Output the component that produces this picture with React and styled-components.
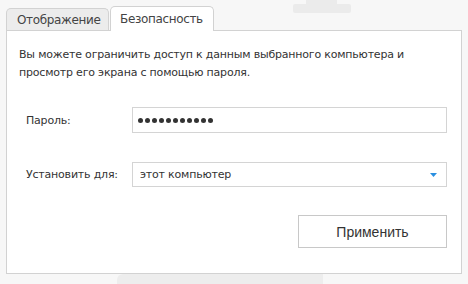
import React from "react";
import styled, { createGlobalStyle } from "styled-components";

const GlobalStyle = createGlobalStyle`
  html, body {
    margin: 0;
    padding: 0;
    background: #f7f7f7;
  }
  body {
    font-family: "DejaVu Sans", Verdana, sans-serif;
    width: 468px;
    height: 284px;
    overflow: hidden;
  }
`;

const Page = styled.div`
  position: relative;
  padding: 6px 6px 0 6px;
`;

// faint backdrop shapes behind the dialog
const StandTop = styled.div`
  position: absolute;
  left: 306px;
  top: 0;
  width: 31px;
  height: 5px;
  background: #ebebeb;
`;

const StandBase = styled.div`
  position: absolute;
  left: 293px;
  top: 4px;
  width: 58px;
  height: 9px;
  border-radius: 2px;
  background: #ebebeb;
`;

const Shelf = styled.div`
  position: absolute;
  left: 117px;
  top: 274px;
  width: 206px;
  height: 10px;
  border-radius: 6px 0 0 0;
  background: #ededed;
`;

const Dialog = styled.div`
  position: relative;
  z-index: 1;
`;

const TabBar = styled.div`
  display: flex;
  align-items: flex-end;
  gap: 1px;
  height: 24px;
`;

const Tab = styled.div`
  box-sizing: border-box;
  position: relative;
  display: flex;
  align-items: center;
  padding-left: ${(p) => (p.$active ? "9px" : "10px")};
  width: ${(p) => (p.$active ? "104px" : "103px")};
  height: ${(p) => (p.$active ? "25px" : "22px")};
  margin-bottom: ${(p) => (p.$active ? "-1px" : "0")};
  background: ${(p) => (p.$active ? "#ffffff" : "#ececec")};
  border: 1px solid #d2d2d2;
  border-bottom: none;
  border-radius: 5px 5px 0 0;
  font-size: 12px;
  letter-spacing: -0.35px;
  color: #444;
  z-index: ${(p) => (p.$active ? 2 : 1)};
`;

const Panel = styled.div`
  box-sizing: border-box;
  width: 456px;
  height: 244px;
  background: #fff;
  border: 1px solid #d2d2d2;
  padding: 15px 14px 0 12px;
`;

const Description = styled.p`
  margin: 0;
  font-size: 11px;
  line-height: 18px;
  letter-spacing: -0.2px;
  color: #333;
`;

const Row = styled.div`
  display: grid;
  grid-template-columns: 106px 315px;
  align-items: center;
  padding-left: 7px;
  margin-top: ${(p) => p.$top}px;
`;

const Label = styled.span`
  font-size: 11px;
  letter-spacing: -0.2px;
  color: #333;
`;

const Field = styled.div`
  box-sizing: border-box;
  display: flex;
  align-items: center;
  height: ${(p) => p.$h}px;
  border: 1px solid #d4d4d4;
  background: #fff;
  padding: 0 9px 0 5px;
  font-size: 11px;
  letter-spacing: -0.2px;
  color: #333;
`;

const Dots = styled.span`
  display: flex;
  gap: 2px;
`;

const Dot = styled.span`
  width: 5px;
  height: 5px;
  border-radius: 50%;
  background: #333;
`;

const Value = styled.span`
  flex: 1;
  padding-left: 2px;
`;

const Footer = styled.div`
  display: flex;
  justify-content: flex-end;
  margin-top: 28px;
`;

const Button = styled.button`
  box-sizing: border-box;
  width: 149px;
  height: 33px;
  border: 1px solid #c8c8c8;
  background: #fff;
  font-family: "Liberation Sans", Arial, sans-serif;
  font-size: 14px;
  color: #333;
  cursor: pointer;
  padding: 0;
`;

export default function App() {
  return (
    <Page>
      <GlobalStyle />
      <StandTop />
      <StandBase />
      <Shelf />
      <Dialog>
        <TabBar>
          <Tab>Отображение</Tab>
          <Tab $active>Безопасность</Tab>
        </TabBar>
        <Panel>
          <Description>
            Вы можете ограничить доступ к данным выбранного компьютера и
            <br />
            просмотр его экрана с помощью пароля.
          </Description>
          <Row $top={25}>
            <Label>Пароль:</Label>
            <Field $h={26}>
              <Dots>
                {Array.from({ length: 11 }).map((_, i) => (
                  <Dot key={i} />
                ))}
              </Dots>
            </Field>
          </Row>
          <Row $top={29}>
            <Label>Установить для:</Label>
            <Field $h={25}>
              <Value>этот компьютер</Value>
              <svg width="7" height="4" viewBox="0 0 7 4">
                <path d="M0 0h7L3.5 4z" fill="#2a8fe0" />
              </svg>
            </Field>
          </Row>
          <Footer>
            <Button>Применить</Button>
          </Footer>
        </Panel>
      </Dialog>
    </Page>
  );
}
